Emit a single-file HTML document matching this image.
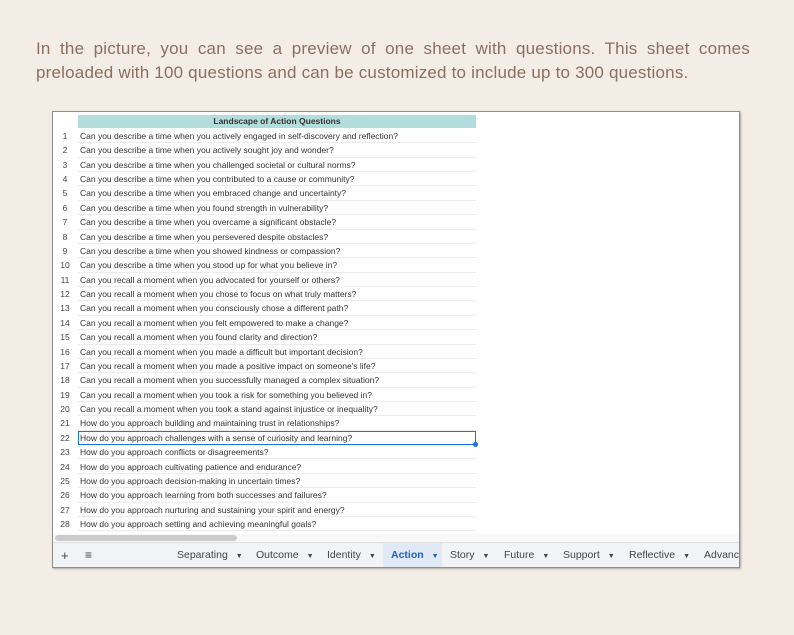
<!DOCTYPE html>
<html><head><meta charset="utf-8"><style>
body{margin:0;width:794px;height:635px;background:#f4ede5;overflow:hidden;position:relative;font-family:"Liberation Sans",sans-serif}
.intro{position:absolute;left:36px;top:37px;width:714px;font-size:17px;line-height:24px;color:#8a6f63;text-align:justify;text-align-last:justify;letter-spacing:0.2px}
.intro span{display:block}
.frame{position:absolute;left:52px;top:111px;width:686px;height:455px;background:#fff;border:1px solid #8e8e8e;box-shadow:1px 1px 2px rgba(0,0,0,.3);overflow:hidden}
.hdr{position:absolute;left:25px;top:3px;width:398px;height:13px;background:#b3dcdc;font-size:8.5px;font-weight:bold;text-align:center;line-height:13px;color:#333}
.row{position:absolute;left:0;height:14.37px;width:423px;font-size:8.5px;line-height:14px;color:#333}
.row .n{position:absolute;left:2px;width:20px;text-align:center;color:#444}
.row .t{position:absolute;left:25px;right:0;top:0;bottom:0;padding-left:2px;border-bottom:1px solid #ececec}
.sel{position:absolute;left:25px;width:396px;height:12px;border:1px solid #1a73e8}
.dot{position:absolute;width:5px;height:5px;border-radius:50%;background:#1a73e8}
.sb{position:absolute;left:0;top:422px;width:686px;height:8px;background:#f8f8f8}
.sb div{position:absolute;left:2px;top:1px;width:182px;height:6px;border-radius:3px;background:#ccc}
.tabs{position:absolute;left:0;top:430px;width:686px;height:25px;background:#f1f3f4;border-top:1px solid #e0e0e0;font-size:10.5px;color:#444}
.tab{position:absolute;top:0;height:25px;line-height:25px;padding:0 8px;white-space:nowrap}
.tab i{font-style:normal;font-size:7px;margin-left:8px}
.act{background:#e1e9f6;color:#1a63c8;font-weight:bold}
</style></head><body>
<div class="intro"><span>In the picture, you can see a preview of one sheet with questions. This sheet comes</span><span style="text-align-last:left">preloaded with 100 questions and can be customized to include up to 300 questions.</span></div>
<div class="frame">
<div class="hdr">Landscape of Action Questions</div>
<div id="rows"></div>
<div class="sb"><div></div></div>
<div class="tabs">
<div class="tab" style="left:0;font-size:13px">+</div>
<div class="tab" style="left:24px;font-size:12px">≡</div>
<div class="tab" style="left:116px">Separating<i>▼</i></div>
<div class="tab" style="left:195px">Outcome<i>▼</i></div>
<div class="tab" style="left:266px">Identity<i>▼</i></div>
<div class="tab act" style="left:330px;width:43px">Action<i>▼</i></div>
<div class="tab" style="left:389px">Story<i>▼</i></div>
<div class="tab" style="left:443px">Future<i>▼</i></div>
<div class="tab" style="left:502px">Support<i>▼</i></div>
<div class="tab" style="left:568px">Reflective<i>▼</i></div>
<div class="tab" style="left:643px">Advanced</div>
</div>
</div>
<script>
var q=["Can you describe a time when you actively engaged in self-discovery and reflection?","Can you describe a time when you actively sought joy and wonder?","Can you describe a time when you challenged societal or cultural norms?","Can you describe a time when you contributed to a cause or community?","Can you describe a time when you embraced change and uncertainty?","Can you describe a time when you found strength in vulnerability?","Can you describe a time when you overcame a significant obstacle?","Can you describe a time when you persevered despite obstacles?","Can you describe a time when you showed kindness or compassion?","Can you describe a time when you stood up for what you believe in?","Can you recall a moment when you advocated for yourself or others?","Can you recall a moment when you chose to focus on what truly matters?","Can you recall a moment when you consciously chose a different path?","Can you recall a moment when you felt empowered to make a change?","Can you recall a moment when you found clarity and direction?","Can you recall a moment when you made a difficult but important decision?","Can you recall a moment when you made a positive impact on someone's life?","Can you recall a moment when you successfully managed a complex situation?","Can you recall a moment when you took a risk for something you believed in?","Can you recall a moment when you took a stand against injustice or inequality?","How do you approach building and maintaining trust in relationships?","How do you approach challenges with a sense of curiosity and learning?","How do you approach conflicts or disagreements?","How do you approach cultivating patience and endurance?","How do you approach decision-making in uncertain times?","How do you approach learning from both successes and failures?","How do you approach nurturing and sustaining your spirit and energy?","How do you approach setting and achieving meaningful goals?"];
var h="";for(var i=0;i<q.length;i++){var t=17+i*14.37;h+='<div class="row" style="top:'+t+'px"><span class="n">'+(i+1)+'</span><span class="t">'+q[i]+'</span></div>';if(i==21){h+='<div class="sel" style="top:'+(t)+'px"></div><div class="dot" style="left:420px;top:'+(t+11)+'px"></div>';}}
document.getElementById("rows").innerHTML=h;
</script>
</body></html>
